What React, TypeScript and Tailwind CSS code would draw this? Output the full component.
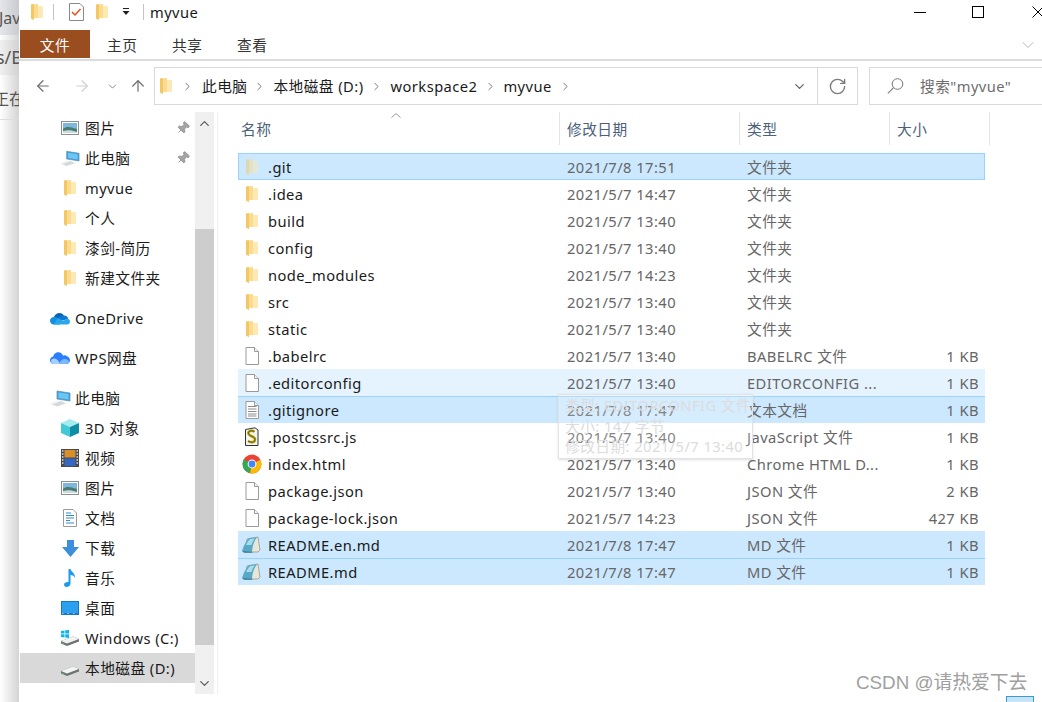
import React from 'react';
import { ArrowLeft, ArrowRight, ArrowUp, ChevronDown, ChevronRight, ChevronUp, RotateCw, Pin } from 'lucide-react';

const Folder = ({ className = '' }: { className?: string }) => (
  <svg width="14" height="18" viewBox="0 0 14 18" className={className}>
    <path d="M1 1.5 L8 1 L8 3 L13 3 L13 15 L4 15 L4 17 L1 15.5 Z" fill="#fbdc8e" />
    <path d="M1 1.5 L4 1.2 L4 17 L1 15.5 Z" fill="#f3c766" />
    <path d="M8 3 L13 3 L13 15 L8 15 Z" fill="#fde9b4" />
  </svg>
);

const BlankFile = ({ lines = false }: { lines?: boolean }) => (
  <svg width="16" height="18" viewBox="0 0 16 18">
    <path d="M2 .5 H10.5 L14.5 4.5 V17.5 H2 Z" fill="#fff" stroke="#9a9a9a" />
    <path d="M10.5 .5 V4.5 H14.5" fill="#f2f2f2" stroke="#9a9a9a" />
    {lines && <path d="M4 5.5 H12.5 M4 8 H12.5 M4 10.5 H12.5 M4 13 H12.5 M4 15 H12.5" stroke="#8c8c8c" strokeWidth="1" />}
  </svg>
);

const ScriptFile = () => (
  <svg width="18" height="20" viewBox="0 0 18 20">
    <path d="M2.5 2.5 L12 .8 L15 3 V18.5 H2.5 Z" fill="#f4f4f0" stroke="#333" />
    <path d="M11.5 4.5 C7 2.5 4 5 6 7.5 C8 10 12 9.5 12 12.5 C12 15.5 8 16 5 14" fill="none" stroke="#b9a512" strokeWidth="2.6" />
    <path d="M11.5 4.5 C7 2.5 4 5 6 7.5 C8 10 12 9.5 12 12.5 C12 15.5 8 16 5 14" fill="none" stroke="#403a10" strokeWidth=".7" />
  </svg>
);

const Chrome = () => (
  <svg width="20" height="20" viewBox="0 0 20 20">
    <circle cx="10" cy="10" r="9.4" fill="#ea4335" />
    <path d="M10 10 L1.8 5.2 A9.4 9.4 0 0 0 7.5 19 Z" fill="#34a853" />
    <path d="M10 10 L18.4 5.8 A9.4 9.4 0 0 1 8 19.2 Z" fill="#fbbc05" />
    <circle cx="10" cy="10" r="4.4" fill="#fff" />
    <circle cx="10" cy="10" r="3.4" fill="#4285f4" />
  </svg>
);

const MdFile = () => (
  <svg width="20" height="18" viewBox="0 0 20 18">
    <path d="M5 3 L16 1 L18 14 L16 16 L3 16 Z" fill="#e6e6da" stroke="#8e8e80" strokeWidth=".7" />
    <path d="M0 15 C2 9 4 5 7 2 L15 1.5 C12 5 10.5 10 10 15.5 Z" fill="#58a9c6" />
    <path d="M0 15 L10 15.5 L10.5 16.8 L2 16.8 Z" fill="#2f7d9b" />
    <path d="M4 9 C5 6.5 6.5 4.5 8 3 L13 2.5 C11 5 10 7 9.5 9 Z" fill="#a8dcea" />
  </svg>
);

const ImagesIcon = () => (
  <svg width="18" height="14" viewBox="0 0 18 14">
    <rect x=".5" y=".5" width="17" height="13" fill="#fff" stroke="#8f8f8f" />
    <rect x="2" y="2" width="14" height="10" fill="#7db7dc" />
    <path d="M2 8 C6 5 9 6 16 8 V12 H2 Z" fill="#4a7d6f" />
    <path d="M2 10 C7 9 10 9 16 11 V12 H2 Z" fill="#c9dbe0" />
  </svg>
);

const PcIcon = () => (
  <svg width="21" height="17" viewBox="0 0 21 17">
    <path d="M7 1 L20 3 V11 L7 9 Z" fill="#33a6e8" stroke="#6f8798" strokeWidth=".7" />
    <path d="M8.5 2.5 L18.5 4 V9.5 L8.5 8 Z" fill="#6cc6f4" />
    <path d="M1 14 L11 11 L16 13.5 L7 16.5 Z" fill="#d6d9db" />
    <path d="M1 13.5 L8 11 V12.5 L1 15 Z" fill="#eceeef" />
  </svg>
);

const OneDrive = () => (
  <svg width="20" height="13" viewBox="0 0 20 13">
    <path d="M4 5 C5 1 11 -1 14 3.5 L8 8 Z" fill="#0364b8" />
    <path d="M13 3.5 C16 3 18 4.5 18 7 L11 9 L7.5 6 Z" fill="#0f78d4" />
    <path d="M4 5 C1.5 5 0 6.8 0 8.8 C0 11 1.8 12.5 3.5 12.5 L10 12.5 L11 8 L7 5.5 Z" fill="#1490df" />
    <path d="M8 6 L13 9 L17.5 6.5 C19 7 20 8.2 20 9.6 C20 11.2 18.8 12.5 17.2 12.5 H3.5 Z" fill="#28a8ea" />
  </svg>
);

const WpsCloud = () => (
  <svg width="20" height="14" viewBox="0 0 20 14">
    <path d="M4 13 C1.5 13 0 11.3 0 9.3 C0 7.3 1.4 6 3 5.8 C3.6 2.5 6.5 .8 9 1.3 C11.2 1.7 12.5 3 13 4.8 C14 4 16 4 17 5.2 C19 6 20 7.5 20 9.2 C20 11.5 18.2 13 16 13 Z" fill="#2b7fff" />
    <path d="M4 13 C2 13 1 11.5 1 10 C1 8.5 2.5 7.5 4 7.5 C6 7.5 8 9 9 11 L10.5 13 Z" fill="#a5d0ff" />
    <path d="M9 13 C10 10 12 8 14.5 8 C17 8 19 9.5 19 11 C19 12.2 18 13 16 13 Z" fill="#7bb8ff" />
  </svg>
);

const Cube = () => (
  <svg width="18" height="18" viewBox="0 0 18 18">
    <path d="M9 0 L18 4 L9 8 L0 4 Z" fill="#a4ecef" />
    <path d="M0 4 L9 8 V18 L0 14 Z" fill="#41c9d5" />
    <path d="M18 4 L9 8 V18 L18 14 Z" fill="#0e8ea6" />
  </svg>
);

const FilmIcon = () => (
  <svg width="18" height="18" viewBox="0 0 18 18">
    <rect x="0" y="0" width="18" height="18" fill="#4a4a4a" />
    <rect x="3.5" y="1" width="11" height="7.5" fill="#d78f2e" />
    <rect x="3.5" y="9.5" width="11" height="7.5" fill="#3467c0" />
    <path d="M1 2 H2.5 M1 5 H2.5 M1 8 H2.5 M1 11 H2.5 M1 14 H2.5 M15.5 2 H17 M15.5 5 H17 M15.5 8 H17 M15.5 11 H17 M15.5 14 H17" stroke="#ddd" strokeWidth="1.4" />
  </svg>
);

const DocIcon = () => (
  <svg width="14" height="18" viewBox="0 0 14 18">
    <path d="M.5 .5 H10 L13.5 4 V17.5 H.5 Z" fill="#fff" stroke="#9a9a9a" />
    <path d="M3 4 H8 M3 6.5 H11 M3 9 H11 M3 11.5 H7 M3 14 H11" stroke="#2f8fd8" strokeWidth="1.2" />
  </svg>
);

const DownIcon = () => (
  <svg width="17" height="17" viewBox="0 0 17 17">
    <path d="M5 0 H12 V7 H17 L8.5 17 L0 7 H5 Z" fill="#3d8fdc" />
  </svg>
);

const MusicIcon = () => (
  <svg width="12" height="18" viewBox="0 0 12 18">
    <path d="M4.5 0 H6.5 C7 3 11.5 4 11 9 C10.5 7 8.5 6 6.5 6 V14.5 C6.5 16.5 4.5 18 2.5 18 C1 18 0 17 0 15.8 C0 14 2.5 12.8 4.5 13.2 Z" fill="#1c9be8" />
  </svg>
);

const DesktopIcon = () => (
  <svg width="18" height="14" viewBox="0 0 18 14">
    <rect x="0" y="0" width="18" height="14" fill="#1a78c2" />
    <rect x="1" y="1" width="16" height="11" fill="#2aa0ee" />
    <path d="M1 12.5 H17" stroke="#bfe3fa" strokeWidth=".8" strokeDasharray="1.5 4" />
  </svg>
);

const DriveBody = () => (
  <>
    <path d="M0 11 L12 6.5 L18 9 V11.5 L6 16 L0 13.5 Z" fill="#6e7272" />
    <path d="M0 11 L12 6.5 L18 9 L6 13.5 Z" fill="#f2f3f3" />
    <path d="M1.5 13 L3.5 13.8" stroke="#4fc04f" strokeWidth="1" />
  </>
);

const WinDrive = () => (
  <svg width="19" height="16" viewBox="0 0 19 16">
    <DriveBody />
    <path d="M0 1 L3.5 .4 V3.6 H0 Z M4.2 .3 L8 0 V3.6 H4.2 Z M0 4.3 H3.5 V7.4 L0 7 Z M4.2 4.3 H8 V8 L4.2 7.5 Z" fill="#12b5ea" />
  </svg>
);

const Drive = () => (
  <svg width="19" height="16" viewBox="0 0 19 16">
    <DriveBody />
  </svg>
);

type NavRow = { label: string; icon: React.ReactNode; indent?: boolean; pin?: boolean; active?: boolean; gap?: boolean };

const navRows: NavRow[] = [
  { label: '图片', icon: <ImagesIcon />, indent: true, pin: true },
  { label: '此电脑', icon: <PcIcon />, indent: true, pin: true },
  { label: 'myvue', icon: <Folder />, indent: true },
  { label: '个人', icon: <Folder />, indent: true },
  { label: '漆剑-简历', icon: <Folder />, indent: true },
  { label: '新建文件夹', icon: <Folder />, indent: true },
  { label: 'OneDrive', icon: <OneDrive />, gap: true },
  { label: 'WPS网盘', icon: <WpsCloud />, gap: true },
  { label: '此电脑', icon: <PcIcon />, gap: true },
  { label: '3D 对象', icon: <Cube />, indent: true },
  { label: '视频', icon: <FilmIcon />, indent: true },
  { label: '图片', icon: <ImagesIcon />, indent: true },
  { label: '文档', icon: <DocIcon />, indent: true },
  { label: '下载', icon: <DownIcon />, indent: true },
  { label: '音乐', icon: <MusicIcon />, indent: true },
  { label: '桌面', icon: <DesktopIcon />, indent: true },
  { label: 'Windows (C:)', icon: <WinDrive />, indent: true },
  { label: '本地磁盘 (D:)', icon: <Drive />, indent: true, active: true },
];

type FileRow = { name: string; date: string; type: string; size?: string; icon: React.ReactNode; rowClass?: string };

const sel = 'bg-[#cce8ff]';
const files: FileRow[] = [
  { name: '.git', date: '2021/7/8 17:51', type: '文件夹', icon: <Folder className="opacity-50" />, rowClass: 'bg-[#cce8ff] shadow-[inset_0_0_0_1px_#99d1ff]' },
  { name: '.idea', date: '2021/5/7 14:47', type: '文件夹', icon: <Folder /> },
  { name: 'build', date: '2021/5/7 13:40', type: '文件夹', icon: <Folder /> },
  { name: 'config', date: '2021/5/7 13:40', type: '文件夹', icon: <Folder /> },
  { name: 'node_modules', date: '2021/5/7 14:23', type: '文件夹', icon: <Folder /> },
  { name: 'src', date: '2021/5/7 13:40', type: '文件夹', icon: <Folder /> },
  { name: 'static', date: '2021/5/7 13:40', type: '文件夹', icon: <Folder /> },
  { name: '.babelrc', date: '2021/5/7 13:40', type: 'BABELRC 文件', size: '1 KB', icon: <BlankFile /> },
  { name: '.editorconfig', date: '2021/5/7 13:40', type: 'EDITORCONFIG ...', size: '1 KB', icon: <BlankFile />, rowClass: 'bg-[#e5f3ff]' },
  { name: '.gitignore', date: '2021/7/8 17:47', type: '文本文档', size: '1 KB', icon: <BlankFile lines />, rowClass: `${sel} shadow-[inset_0_1px_0_#99d1ff]` },
  { name: '.postcssrc.js', date: '2021/5/7 13:40', type: 'JavaScript 文件', size: '1 KB', icon: <ScriptFile /> },
  { name: 'index.html', date: '2021/5/7 13:40', type: 'Chrome HTML D...', size: '1 KB', icon: <Chrome /> },
  { name: 'package.json', date: '2021/5/7 13:40', type: 'JSON 文件', size: '2 KB', icon: <BlankFile /> },
  { name: 'package-lock.json', date: '2021/5/7 14:23', type: 'JSON 文件', size: '427 KB', icon: <BlankFile /> },
  { name: 'README.en.md', date: '2021/7/8 17:47', type: 'MD 文件', size: '1 KB', icon: <MdFile />, rowClass: sel },
  { name: 'README.md', date: '2021/7/8 17:47', type: 'MD 文件', size: '1 KB', icon: <MdFile />, rowClass: `${sel} shadow-[inset_0_1px_0_#99d1ff]` },
];

const columns = [
  { label: '名称', width: 'w-[322px]' },
  { label: '修改日期', width: 'w-[180px]' },
  { label: '类型', width: 'w-[150px]' },
  { label: '大小', width: 'w-[100px]' },
];

const App: React.FC = () => {
  return (
    <div className="relative flex w-[1042px] h-[702px] overflow-hidden bg-white text-[14.7px] tracking-[0.45px] text-[#1a1a1a] font-['Noto_Sans','Noto_Sans_CJK_SC',sans-serif]">
      {/* app behind the window */}
      <div className="w-[19px] h-full shrink-0 flex flex-col bg-gradient-to-r from-white to-[#d4d4d4] text-[#555] whitespace-nowrap overflow-hidden text-[16px] tracking-normal">
        <div className="h-[35px] pt-1.5 bg-gradient-to-r from-[#e4e6e9] to-[#c9cbce]"><span className="-ml-[1px] inline-block">Jav</span></div>
        <div className="h-[5px]" />
        <div className="h-[35px] pt-1 bg-gradient-to-r from-[#f0f0f0] to-[#d2d2d2]"><span className="-ml-[4px] inline-block text-[18px]">s/B</span></div>
        <div className="h-[45px] pt-3 border-b border-[#ddd]"><span className="-ml-[7px] inline-block">正在</span></div>
      </div>

      <div className="flex-1 min-w-0 flex flex-col">
        {/* title bar */}
        <div className="h-[24px] mb-[6px] flex items-center shrink-0">
          <Folder className="ml-[11px]" />
          <div className="w-px h-4 bg-[#c4c4c4] ml-[9px]" />
          <svg width="15" height="18" viewBox="0 0 15 18" className="ml-[15px]">
            <path d="M.5 .5 H11 L14.5 4 V17.5 H.5 Z" fill="#fff" stroke="#8a8a8a" />
            <path d="M3 9 L6 12 L11.5 6" fill="none" stroke="#e2511f" strokeWidth="1.5" />
          </svg>
          <Folder className="ml-[11px]" />
          <svg width="8" height="8" viewBox="0 0 8 8" className="ml-[13px]">
            <path d="M1 .5 H7" stroke="#222" />
            <path d="M.5 3 H7.5 L4 7 Z" fill="#222" />
          </svg>
          <div className="w-px h-4 bg-[#c4c4c4] ml-[13px]" />
          <span className="ml-[6px]">myvue</span>
          <div className="ml-auto mr-[-2px] flex items-center text-black">
            <svg width="12" height="1" viewBox="0 0 12 1" className="shrink-0"><path d="M0 .5 H12" stroke="#000" /></svg>
            <svg width="12" height="12" viewBox="0 0 12 12" className="ml-[46px] shrink-0"><rect x=".5" y=".5" width="11" height="11" fill="none" stroke="#000" /></svg>
            <svg width="12" height="12" viewBox="0 0 12 12" className="ml-[48px] shrink-0"><path d="M.5 .5 L11.5 11.5 M11.5 .5 L.5 11.5" stroke="#000" /></svg>
          </div>
        </div>

        {/* ribbon tabs */}
        <div className="h-[31px] shrink-0 flex items-start border-b-2 border-[#dcdcdc]">
          <div className="w-[70px] h-[28px] ml-px pt-[2px] bg-[#9a4d1f] text-white flex items-center justify-center">文件</div>
          <span className="ml-[17px] w-[65px] h-[28px] pt-[2px] flex items-center text-[#333]">主页</span>
          <span className="w-[65px] h-[28px] pt-[2px] flex items-center text-[#333]">共享</span>
          <span className="h-[28px] pt-[2px] flex items-center text-[#333]">查看</span>
          <ChevronDown size={20} strokeWidth={1} className="ml-auto mt-[5px] mr-[4px] text-[#a8a8a8]" />
        </div>

        {/* address bar */}
        <div className="h-[38px] mt-[6px] shrink-0 flex items-center">
          <ArrowLeft size={18} strokeWidth={1.6} className="ml-[15px] text-[#6e6e6e]" />
          <ArrowRight size={18} strokeWidth={1.6} className="ml-[21px] text-[#d0d0d0]" />
          <ChevronDown size={13} strokeWidth={1.8} className="ml-[15px] text-[#8a8a8a]" />
          <ArrowUp size={18} strokeWidth={1.6} className="ml-[10px] text-[#6e6e6e]" />
          <div className="ml-[7px] w-[664px] h-full border border-[#d9d9d9] flex items-center">
            <Folder className="ml-[4px]" />
            <ChevronRight size={13} strokeWidth={1.8} className="ml-[8px] text-[#777]" />
            <span className="ml-[8px] pt-[1px]">此电脑</span>
            <ChevronRight size={13} strokeWidth={1.8} className="ml-[6px] text-[#777]" />
            <span className="ml-[7px] pt-[1px]">本地磁盘 (D:)</span>
            <ChevronRight size={13} strokeWidth={1.8} className="ml-[6px] text-[#777]" />
            <span className="ml-[8px] pt-[1px]">workspace2</span>
            <ChevronRight size={13} strokeWidth={1.8} className="ml-[7px] text-[#777]" />
            <span className="ml-[6px] pt-[1px]">myvue</span>
            <ChevronRight size={13} strokeWidth={1.8} className="ml-[7px] text-[#777]" />
            <ChevronDown size={15} strokeWidth={2} className="ml-auto mr-[10px] text-[#666]" />
          </div>
          <div className="w-[40px] h-full border border-l-0 border-[#d9d9d9] flex items-center justify-center">
            <RotateCw size={19} strokeWidth={1.7} className="text-[#7a7a7a]" />
          </div>
          <div className="ml-[11px] flex-1 h-full border border-r-0 border-[#d9d9d9] flex items-center text-[#6d6d6d]">
            <svg width="17" height="16" viewBox="0 0 17 16" className="ml-[17px] shrink-0">
              <circle cx="10.5" cy="6" r="5.3" fill="none" stroke="#777" strokeWidth="1" />
              <path d="M6.5 9.8 L.8 15.4" stroke="#888" strokeWidth="1.2" />
            </svg>
            <span className="ml-[16px] pt-[1px] whitespace-nowrap">搜索"myvue"</span>
          </div>
        </div>

        {/* body */}
        <div className="flex-1 min-h-0 flex mt-[7px]">
          <div className="w-[176px] shrink-0 pt-px">
            {navRows.map((r, i) => (
              <div
                key={i}
                className={`h-[30px] flex items-center relative ${r.active ? 'bg-[#d9d9d9] ml-px' : ''} ${r.gap ? 'mt-[10px]' : ''}`}
              >
                <div className={`flex items-center justify-center shrink-0 ${r.indent ? (r.active ? 'w-[20px] ml-[40px]' : 'w-[20px] ml-[41px]') : 'w-[22px] ml-[30px]'}`}>
                  {r.icon}
                </div>
                <span className={`whitespace-nowrap ${r.indent ? 'ml-[5px]' : 'ml-[4px]'}`}>{r.label}</span>
                {r.pin && <Pin size={14} strokeWidth={1.4} className="absolute left-[157px] rotate-45 text-[#8d8d8d] fill-[#a5a5a5]" />}
              </div>
            ))}
          </div>

          {/* nav scrollbar */}
          <div className="w-[19px] h-[582px] shrink-0 flex flex-col bg-[#f0f0f0]">
            <div className="h-[117px] flex justify-center pt-[4px]"><ChevronUp size={15} strokeWidth={2.2} className="text-[#606060]" /></div>
            <div className="h-[416px] bg-[#cdcdcd]" />
            <div className="flex-1 flex items-end justify-center pb-[3px]"><ChevronDown size={15} strokeWidth={2.2} className="text-[#606060]" /></div>
          </div>
          <div className="w-px h-[582px] ml-[3px] bg-[#f0f0f0] shrink-0" />

          {/* file list */}
          <div className="ml-[20px] flex-1 min-w-0 relative">
            <div className="h-[41px] flex items-start relative">
              {columns.map((c) => (
                <div key={c.label} className={`${c.width} h-[33px] pt-[2px] pl-[7px] first:pl-[3px] flex items-center border-r border-[#e5e5e5] text-[#4c607a] shrink-0`}>
                  {c.label}
                </div>
              ))}
              <svg width="10" height="5" viewBox="0 0 10 5" className="absolute left-[153px] top-[1px]">
                <path d="M.5 4.5 L5 .5 L9.5 4.5" fill="none" stroke="#9a9a9a" />
              </svg>
            </div>
            <div className="w-[747px]">
              {files.map((f) => (
                <div key={f.name} className={`h-[27px] flex items-center ${f.rowClass ?? ''}`}>
                  <div className="w-[28px] flex justify-center shrink-0">{f.icon}</div>
                  <span className="w-[301px] pl-[2px] pt-[2px] shrink-0 whitespace-nowrap">{f.name}</span>
                  <span className="w-[180px] pt-[2px] shrink-0 text-[#666]">{f.date}</span>
                  <span className="w-[160px] pt-[2px] shrink-0 text-[#666] whitespace-nowrap">{f.type}</span>
                  <span className="w-[72px] pt-[2px] shrink-0 text-right text-[#666]">{f.size}</span>
                </div>
              ))}
            </div>
            {/* tooltip left over from hovering .editorconfig */}
            <div className="absolute left-[320px] top-[282px] w-[195px] h-[65px] px-[6px] bg-white/20 border border-[#e3e3e3] shadow-sm text-[#dcdcdc] leading-[20.5px] whitespace-nowrap overflow-hidden">
              <div>类型: EDITORCONFIG 文件</div>
              <div>大小: 147 字节</div>
              <div>修改日期: 2021/5/7 13:40</div>
            </div>
          </div>
        </div>
      </div>

      {/* watermark */}
      <div className="absolute left-[856px] top-[670px] text-[18.8px] tracking-normal leading-[26px] text-[#a0a0a0] whitespace-nowrap font-['Liberation_Sans','Noto_Sans_CJK_SC',sans-serif]">CSDN @请热爱下去</div>
      <div className="absolute left-[1006px] top-[696px] w-[28px] h-[6px] bg-[#c6e4f6] border border-b-0 border-[#3a9ad9]" />
    </div>
  );
};

export default App;
